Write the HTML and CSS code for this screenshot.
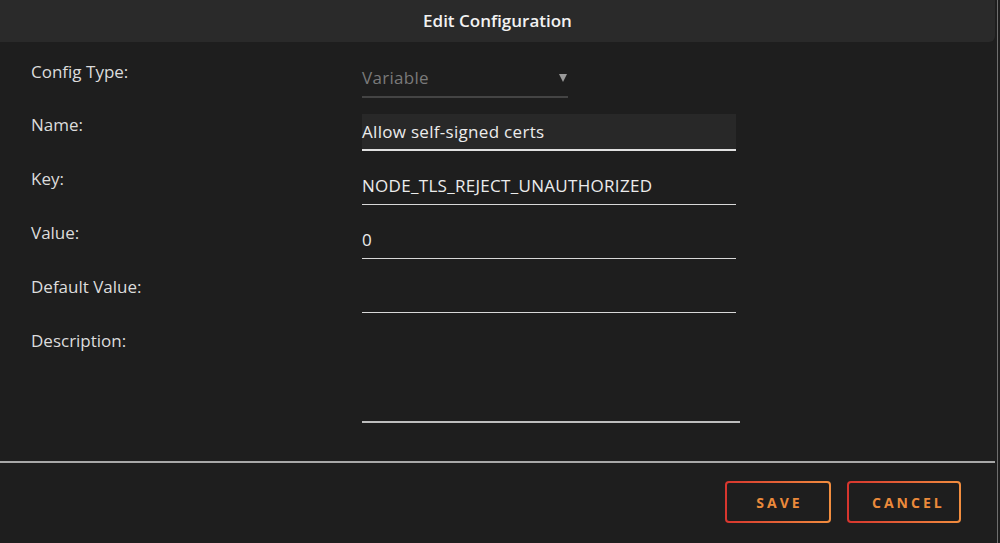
FILE: index.html
```html
<!DOCTYPE html>
<html lang="en">
  <head>
    <title>Edit Configuration</title>
    <meta charset="UTF-8">
    <link rel="stylesheet" href="styles.css">
  </head>
  <body>
    <div class="frame">
      <div class="dialog">
        <header class="dialog__header">Edit Configuration</header>
        <form class="config-form">
          <label class="config-form__label">Config Type:</label>
          <div class="field field--select">
            <span class="field__value">Variable</span>
            <span class="caret"></span>
          </div>

          <label class="config-form__label">Name:</label>
          <div class="field field--active">
            <span class="field__value">Allow self-signed certs</span>
          </div>

          <label class="config-form__label">Key:</label>
          <div class="field">
            <span class="field__value">NODE_TLS_REJECT_UNAUTHORIZED</span>
          </div>

          <label class="config-form__label">Value:</label>
          <div class="field">
            <span class="field__value">0</span>
          </div>

          <label class="config-form__label">Default Value:</label>
          <div class="field"></div>

          <label class="config-form__label">Description:</label>
          <div class="field field--area"></div>
        </form>
        <hr class="divider">
        <footer class="dialog__footer">
          <button class="btn" type="button">SAVE</button>
          <button class="btn" type="button">CANCEL</button>
        </footer>
      </div>
      <div class="scroll-edge"></div>
    </div>
  </body>
</html>
```

FILE: styles.css
```css
* {
  box-sizing: border-box;
}
html, body {
  margin: 0;
  padding: 0;
  height: 100%;
  background-color: #1e1e1e;
  font-family: 'Open Sans', 'Noto Sans', sans-serif;
  color: #dedede;
}

.frame {
  display: flex;
  height: 543px;
  overflow: hidden;
}
.dialog {
  width: 995px;
  display: flex;
  flex-direction: column;
}
.scroll-edge {
  width: 1px;
  margin-left: 2px;
  background-color: #6e6e6e;
}

.dialog__header {
  height: 42px;
  line-height: 42px;
  text-align: center;
  background-color: #2a2a2a;
  border-bottom-right-radius: 6px;
  font-size: 17px;
  font-weight: 600;
  color: #f2f2f2;
}

/* FORM
---------------------------------------------------------------- */
.config-form {
  display: grid;
  grid-template-columns: 331px 378px;
  row-gap: 16px;
  padding: 19px 0 0 31px;
  margin: 0;
}
.config-form__label {
  font-size: 17px;
  line-height: 21px;
  color: #dcdcdc;
}

.field {
  width: 374px;
  height: 37px;
  display: flex;
  align-items: center;
  padding-bottom: 2px;
  border-bottom: 1px solid #d8d8d8;
  font-size: 17px;
  letter-spacing: 0.3px;
  color: #ececec;
}
.config-form__label:nth-of-type(n+3) { margin-top: 1px; }
.config-form .field:nth-of-type(n+3) { margin-top: 1px; }

.field--select {
  width: 206px;
  border-bottom: 2px solid #444;
  justify-content: space-between;
  color: #7a7a7a;
}
.field--active {
  background-color: #282828;
  padding-bottom: 1px;
  border-bottom: 2px solid #e0e0e0;
}
.field--area {
  width: 378px;
  height: 93px;
  border-bottom: 2px solid #bdbdbd;
}
.caret {
  width: 0;
  height: 0;
  margin-right: 1px;
  border-left: 4px solid transparent;
  border-right: 4px solid transparent;
  border-top: 8px solid #9a9a9a;
}

.divider {
  width: 995px;
  margin: 38px 0 0 0;
  border: none;
  height: 2px;
  background-color: #a8a8a8;
}

/* FOOTER
---------------------------------------------------------------- */
.dialog__footer {
  display: flex;
  justify-content: flex-end;
  gap: 16px;
  padding: 18px 34px 0 0;
}
.btn {
  height: 42px;
  padding: 0 20px 0 23px;
  border: 2px solid transparent;
  border-radius: 4px;
  background:
    linear-gradient(#1e1e1e, #1e1e1e) padding-box,
    linear-gradient(to right, #d7352e, #f28e3f) border-box;
  color: #ec8a3b;
  font-family: 'Open Sans', 'Noto Sans', sans-serif;
  font-size: 14px;
  font-weight: 700;
  letter-spacing: 3px;
}
.btn:first-child { width: 106px; }
.btn:last-child { width: 114px; }
```
